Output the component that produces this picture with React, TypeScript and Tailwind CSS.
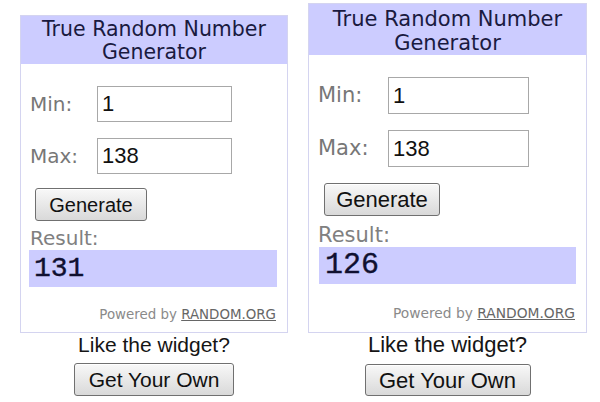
import React from "react";

type Size = {
  wrap: string;
  header: string;
  body: string;
  row: string;
  row2: string;
  label: string;
  input: string;
  gen: string;
  resLabel: string;
  resBox: string;
  resText: string;
  powered: string;
  like: string;
  own: string;
};

const small: Size = {
  wrap: "mt-[15px] w-[268px]",
  header: "h-[48px] pt-[2px] text-[20.5px] leading-[23px]",
  body: "pt-[22px] pb-[9px]",
  row: "h-[36px]",
  row2: "mt-[16px] h-[36px]",
  label: "w-[76px] pl-[9px] text-[20px]",
  input: "w-[135px] h-[36px] text-[22px] pl-[4px]",
  gen: "mt-[14px] ml-[14px] w-[112px] h-[33px] text-[20px]",
  resLabel: "mt-[6px] h-[23px] pl-[9px] text-[20px] leading-[23px]",
  resBox: "ml-[8px] w-[248px] h-[37px] pl-[5px]",
  resText: "text-[28px]",
  powered: "mt-[20px] pr-[11px] text-[13.4px] leading-[16px]",
  like: "text-[21px] leading-[24px]",
  own: "mt-[6px] w-[160px] h-[33px] text-[21px]",
};

const big: Size = {
  wrap: "mt-[3px] w-[279px]",
  header: "h-[51px] pt-[3px] text-[21px] leading-[24px]",
  body: "pt-[22px] pb-[11px]",
  row: "h-[37px]",
  row2: "mt-[16px] h-[37px]",
  label: "w-[79px] pl-[9px] text-[21px]",
  input: "w-[141px] h-[37px] text-[22px] pl-[4px]",
  gen: "mt-[16px] ml-[15px] w-[116px] h-[33px] text-[22px]",
  resLabel: "mt-[8px] h-[23px] pl-[9px] text-[21px] leading-[23px]",
  resBox: "ml-[10px] w-[257px] h-[37px] pl-[6px]",
  resText: "text-[30px]",
  powered: "mt-[21px] pr-[11px] text-[13.8px] leading-[16px]",
  like: "text-[22px] leading-[24px]",
  own: "mt-[7px] w-[166px] h-[32px] text-[22px]",
};

const verdana = "font-['DejaVu_Sans',Verdana,sans-serif]";
const arial = "font-['Liberation_Sans',Arial,sans-serif]";
const btn =
  "flex items-center justify-center rounded-[3px] border border-[#707070] bg-gradient-to-b from-[#f8f8f8] to-[#d9d9d9] text-[#111] shadow-[inset_0_1px_0_#fff]";

function Widget({ s, result }: { s: Size; result: string }) {
  return (
    <div className={`flex flex-col items-center ${s.wrap}`}>
      <div className="w-full border border-[#d4d4f0] bg-white">
        <div className={`bg-[#ccccff] text-center text-[#1a1a40] ${verdana} ${s.header}`}>
          True Random Number
          <br />
          Generator
        </div>
        <div className={`flex flex-col ${s.body}`}>
          <div className={`flex items-center ${s.row}`}>
            <span className={`text-[#777] ${verdana} ${s.label}`}>Min:</span>
            <input
              readOnly
              value="1"
              className={`border border-[#a8a8a8] bg-white text-[#111] outline-none ${arial} ${s.input}`}
            />
          </div>
          <div className={`flex items-center ${s.row2}`}>
            <span className={`text-[#777] ${verdana} ${s.label}`}>Max:</span>
            <input
              readOnly
              value="138"
              className={`border border-[#a8a8a8] bg-white text-[#111] outline-none ${arial} ${s.input}`}
            />
          </div>
          <button className={`${btn} ${arial} ${s.gen}`}>Generate</button>
          <div className={`text-[#808080] ${verdana} ${s.resLabel}`}>Result:</div>
          <div className={`flex items-center bg-[#ccccff] ${s.resBox}`}>
            <span className={`font-['Liberation_Mono','Courier_New',monospace] text-[#101030] [-webkit-text-stroke:0.4px_#101030] ${s.resText}`}>
              {result}
            </span>
          </div>
          <div className={`text-right text-[#8a8a8a] ${verdana} ${s.powered}`}>
            Powered by <span className="text-[#666] underline">RANDOM.ORG</span>
          </div>
        </div>
      </div>
      <div className={`text-[#151515] ${arial} ${s.like}`}>Like the widget?</div>
      <button className={`${btn} ${arial} ${s.own}`}>Get Your Own</button>
    </div>
  );
}

export default function App() {
  return (
    <div className="flex h-[402px] w-[600px] items-start gap-[20px] overflow-hidden bg-white pl-[20px]">
      <Widget s={small} result="131" />
      <Widget s={big} result="126" />
    </div>
  );
}
